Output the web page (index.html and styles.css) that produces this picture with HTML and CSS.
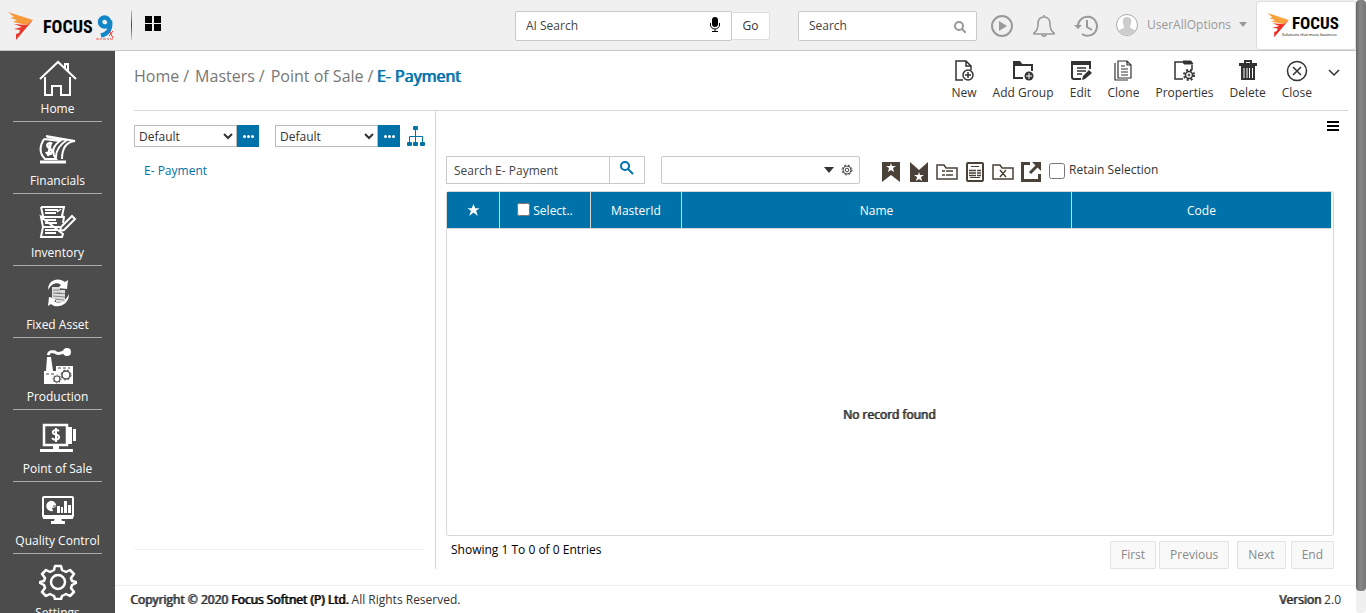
FILE: index.html
```html
<!DOCTYPE html>
<html lang="en">
<head>
<meta charset="utf-8">
<title>E- Payment</title>
<link rel="stylesheet" href="styles.css">
</head>
<body>
<div class="app">
  <header class="topbar">
    <a class="brand" href="#" aria-label="Focus 9">
      <svg class="brand-mark" width="26" height="29" viewBox="0 0 26 29"><path d="M0 0L25 8 19 13 5 10 9 8 2 6 6 5z" fill="#f79a3c"/><path d="M6 12L19 13 25 8 8 28 8 22 11 21 12 18 6 17 14 15z" fill="#e8392b"/></svg>
      <span class="brand-name">FOCUS</span>
      <svg class="brand-nine" width="19" height="28" viewBox="0 0 19 28"><path d="M13 8.500a4.500 4.500 0 1 0-4.500 5c3 0 5-1 5.500-6 1 8-1 13-9 15" fill="none" stroke="#1287c8" stroke-width="4.500"/><path d="M13 17l4 8M17 18l-4 5" stroke="#e33" stroke-width="1"/><path d="M0 26h17" stroke="#e55" stroke-width="1" stroke-dasharray="3 1 2 1"/></svg>
    </a>
    <span class="brand-rule"></span>
    <button class="plain" aria-label="Applications"><svg width="16" height="15"><path d="M0 0h7v7H0zM9 0h7v7H9zM0 8h7v7H0zM9 8h7v7H9z"/></svg></button>
    <div class="topbar-right">
      <form class="ai-search">
        <label class="field field-ai"><input type="text" placeholder="AI Search" aria-label="AI Search">
          <svg class="mic" width="10" height="15" viewBox="0 0 10 15"><rect x="2" y="0" width="6" height="10" rx="3"/><path d="M.5 6v2a4.500 4 0 0 0 9 0V6M5 12v2M2 14.500h6" fill="none" stroke="#000"/></svg></label>
        <button class="go" type="button">Go</button>
      </form>
      <label class="field field-search"><input type="text" placeholder="Search" aria-label="Search">
        <svg class="low" width="12" height="12" viewBox="0 0 12 12" fill="none" stroke="#999" stroke-width="2"><circle cx="5" cy="5" r="4"/><path d="M8 8l4 4"/></svg></label>
      <nav class="tools" aria-label="Quick tools">
        <button class="plain" aria-label="Play"><svg width="24" height="24" viewBox="0 0 24 24"><circle cx="12" cy="12" r="10" fill="none" stroke="#999" stroke-width="2"/><path d="M9 7l8 5-8 5z" fill="#999"/></svg></button>
        <button class="plain" aria-label="Notifications"><svg width="22" height="24" viewBox="0 0 22 24" fill="none" stroke="#999" stroke-width="1.600"><path d="M11 3c-4 0-6 3-6 7 0 5-1 7-4 9v1h20v-1c-3-2-4-4-4-9 0-4-2-7-6-7zM9 20c0 3 4 3 4 0M11 1v2"/></svg></button>
        <button class="plain" aria-label="History"><svg width="24" height="24" viewBox="0 0 24 24" fill="none" stroke="#999" stroke-width="2"><path d="M4 13a9.500 9.500 0 1 1 4 7M13 6v7l5 3"/><path d="M0 11l4 4 4-4z" fill="#999" stroke="none"/></svg></button>
      </nav>
      <button class="plain user"><svg width="22" height="22" viewBox="0 0 22 22"><circle cx="11" cy="11" r="10.500" fill="#fff" stroke="#aaa"/><path d="M11 3c-3 0-5 2-4 6 0 2 1 2 1 4 0 2-5 2-5 4 4 5 12 5 16 0 0-2-5-2-5-4 0-2 1-2 1-4 1-4-1-6-4-6z" fill="#ccc"/></svg>
        <span>UserAllOptions</span><svg width="8" height="5"><path d="M0 0h8L4 5z" fill="#999"/></svg></button>
      <a class="company" href="#" aria-label="Focus">
        <svg width="23" height="25" viewBox="0 0 26 29"><path d="M0 0L25 8 19 13 5 10 9 8 2 6 6 5z" fill="#f9a13a"/><path d="M6 12L19 13 25 8 8 28 8 22 11 21 12 18 6 17 14 15z" fill="#ee2e24"/></svg>
        <span class="company-text"><b>FOCUS</b><small>Solutions that move business</small></span>
      </a>
    </div>
  </header>

  <div class="body">
    <nav class="sidebar" aria-label="Modules">
      <a href="#"><svg width="38" height="36" viewBox="0 0 38 36" fill="none" stroke="#fff" stroke-width="2"><path d="M1 19L19 2l18 17M26 8V4h3v7M6 17v18h7v-9h9v9h9V17" /></svg>Home</a>
      <a href="#"><svg width="38" height="36" viewBox="0 0 38 36" fill="none" stroke="#fff" stroke-width="2"><path d="M5 7c-5 8-5 14 1 20h11c-5-7-3-13 4-18L5 7M7 4l29 5c-9 1-13 8-13 18M17 28c-1-9 3-15 11-20L8 5"/><path d="M1 30h26" stroke-width="3"/><path d="M13 12c-3-2-6 0-4 3 1 2 5 2 4 5s-5 2-6 0M12 10l-3 14" stroke-width="2.400"/></svg>Financials</a>
      <a href="#"><svg width="38" height="36" viewBox="0 0 38 36" fill="none" stroke="#fff"><path d="M2 3h23l-2 9 2 1-1 6M24 30l-1 3H2l2-10-2-10zM2 13l2-1-2-9M3 13h21M4 23h17" stroke-width="2"/><path d="M6 6h13M6 9h11M6 16h11M6 19h12M6 26h12M6 29h11" stroke-width="2"/><path d="M22 23L33 12l3 3-11 11-4 1z" stroke-width="2"/><path d="M18 8l4-3" stroke-width="1.500"/></svg>Inventory</a>
      <a href="#"><svg width="38" height="36" viewBox="0 0 38 36"><path d="M9 14C9 3 20 1 26 6l3-2-1 9-9-1 3-3C18 5 12 8 9 14zM30 18c0 12-13 15-18 10l-3 2 1-9 9 2-4 2c5 4 12 0 15-7z" fill="#fff"/><path d="M13 11h8v3h5v12h-9v-3h-4z" fill="#ddd"/><path d="M14 14h7M14 17h7l5 1M14 20l12 1M16 23l9 1" stroke="#888"/></svg>Fixed Asset</a>
      <a href="#"><svg width="38" height="36" viewBox="0 0 38 36"><path d="M5 36V23h2L8 9h4l2 14h3v-5h17v18z" fill="#fff"/><path d="M9 7c2-5 4-3 7-3 3 3 5 1 9 0" stroke="#fff" stroke-width="3" fill="none"/><circle cx="28" cy="4" r="4" fill="#fff"/><g fill="none" stroke="#4c4c4c"><path d="M7 26h8M19 20h12" stroke-dasharray="3 2"/><circle cx="27" cy="27" r="4" stroke-width="1.500"/><circle cx="27" cy="27" r="5" stroke-dasharray="2 2"/><circle cx="18" cy="31" r="3" stroke-width="1.200"/><circle cx="18" cy="31" r="4" stroke-dasharray="1 2"/></g></svg>Production</a>
      <a href="#"><svg width="38" height="36" viewBox="0 0 38 36"><path d="M5 5h23v20H5z" fill="none" stroke="#fff" stroke-width="2.500"/><path d="M29 7h4v2h4v12h-4v3h-4zM14 26h6v3h14v3H1v-3h13z" fill="#fff"/><path d="M33.500 9v13" stroke="#4c4c4c"/><path d="M20 11c-2-2-7-1-6 2 1 2 6 1 6 4s-5 4-7 1M17 8v14" fill="none" stroke="#fff" stroke-width="2"/></svg>Point of Sale</a>
      <a href="#"><svg width="38" height="36" viewBox="0 0 38 36"><rect x="4" y="5" width="30" height="20" rx="1" fill="none" stroke="#fff" stroke-width="2"/><path d="M4 23h30v4H4zM16 26h6l1 3h3v3H12v-3h3zM18 14h3v7h-3zM22 15h2v6h-2zM25 9h3v12h-3zM29 13h3v8h-3z" fill="#fff"/><path d="M11 9a5 5 0 1 0 3 10l-1-3 4-1a5 5 0 0 0-6-6z" fill="#fff"/><path d="M14 14h4" stroke="#4c4c4c"/></svg>Quality Control</a>
      <a href="#"><svg width="38" height="36" viewBox="0 0 38 36" fill="none" stroke="#fff" stroke-width="2.500"><circle cx="19" cy="18" r="7"/><path d="M16 2h6l1 4 4 2 4-2 4 4-3 4 1 3 4 1v1l-4 2-1 3 3 4-4 4-4-2-4 2-1 3h-6l-1-3-4-2-4 2-4-4 3-4-1-3-4-2v-1l4-1 1-3-3-4 4-4 4 2 4-2z" stroke-linejoin="round"/></svg>Settings</a>
    </nav>

    <div class="page">
      <main class="main">
        <div class="heading">
          <nav class="crumbs" aria-label="Breadcrumb"><a href="#">Home</a><span>/</span><a href="#">Masters</a><span>/</span><a href="#">Point of Sale</a><span class="tight">/</span><strong>E- Payment</strong></nav>
          <div class="actions">
            <button><svg viewBox="0 0 22 22"><path d="M10 20H3V1h10l5 5v4M13 1v5h5" stroke-width="1.500"/><circle cx="15" cy="15" r="5" stroke-width="1.500"/><path d="M15 12v6M12 15h6" stroke-width="1.500"/></svg>New</button>
            <button><svg viewBox="0 0 22 22"><path d="M11 18H2V3M2 5h18v6" stroke-width="2"/><path d="M1 1h7l3 4H1z" fill="#333" stroke="none"/><circle cx="17" cy="16" r="4.500" fill="#333" stroke="none"/><path d="M17 13v6M14 16h6" stroke="#fff"/></svg>Add Group</button>
            <button><svg viewBox="0 0 22 22"><path d="M11 19H4q-2 0-2-2V3h18v6" stroke-width="2"/><path d="M1 1h20v4H1z" fill="#333" stroke="none"/><path d="M7 8h9M7 11h9M7 14h5" stroke-width="1.500"/><path d="M12 20l1-4 6-6 3 3-7 6z" fill="#333" stroke="none"/></svg>Edit</button>
            <button><svg viewBox="0 0 22 22"><path d="M6 1h9l4 4v13H6zM15 1v4h4M3 3v17h13M9 6h4M9 9h7M9 12h7M9 15h7" stroke-width="1.200"/></svg>Clone</button>
            <button><svg viewBox="0 0 22 22"><path d="M10 19H2V2h8M19 5v5" stroke-width="1.500"/><path d="M10 1h8l2 3h-9z" fill="#333"/><circle cx="16" cy="15" r="3.500" stroke-width="1.500"/><circle cx="16" cy="15" r="5" stroke-width="2" stroke-dasharray="2 2"/><circle cx="16" cy="15" r="1"/></svg>Properties</button>
            <button><svg viewBox="0 0 22 22"><path d="M8 3V1h6v2" stroke-width="2"/><path d="M2 3h18v3H2zM4 6h14v14H4z" fill="#333" stroke="none"/><path d="M7 8v10M10 8v10M12.500 8v10M15.500 8v10" stroke="#fff"/></svg>Delete</button>
            <button><svg viewBox="0 0 22 22"><circle cx="11" cy="11" r="9.500" stroke-width="1.500"/><path d="M7 7l8 8M15 7l-8 8" stroke-width="1.500"/></svg>Close</button>
            <button class="more" aria-label="More actions"><svg viewBox="0 0 22 22"><path d="M6 10l5 5 5-5" stroke-width="1.500"/></svg></button>
          </div>
        </div>

        <div class="columns">
          <section class="tree">
            <div class="views">
              <select aria-label="Tree view"><option>Default</option></select><button class="dots" aria-label="Edit tree view"><i></i><i></i><i></i></button>
              <select class="second" aria-label="List view"><option>Default</option></select><button class="dots" aria-label="Edit list view"><i></i><i></i><i></i></button>
              <button class="plain org" aria-label="Hierarchy"><svg width="18" height="20" viewBox="0 0 18 20"><path d="M8.500 2v16M2.500 17v-6.500h13V17" fill="none" stroke="#0072aa"/><g fill="#0072aa"><rect x="6" y="0" width="5" height="4" rx="1"/><rect x="0" y="16" width="5" height="4" rx="1"/><rect x="6" y="16" width="5" height="4" rx="1"/><rect x="13" y="16" width="5" height="4" rx="1"/></g></svg></button>
            </div>
            <div class="tree-list"><a href="#">E- Payment</a></div>
          </section>

          <section class="records">
            <button class="plain menu" aria-label="Menu"><svg width="12" height="10"><path d="M0 1h12M0 5h12M0 9h12" stroke="#000" stroke-width="2"/></svg></button>
            <div class="filters">
              <input class="find" type="text" placeholder="Search E- Payment" aria-label="Search E- Payment"><button class="find-go" aria-label="Find"><svg width="14" height="14" viewBox="0 0 14 14" fill="none" stroke="#0072aa" stroke-width="2"><circle cx="5" cy="5" r="4"/><path d="M8 8l5 5"/></svg></button>
              <div class="combo"><input type="text" aria-label="Filter"><svg width="10" height="6"><path d="M0 0h10L5 6z" fill="#333"/></svg><svg width="12" height="12" viewBox="0 0 12 12" fill="none" stroke="#444"><circle cx="6" cy="6" r="4"/><circle cx="6" cy="6" r="5" stroke-dasharray="2 2"/><circle cx="6" cy="6" r="1.800"/></svg></div>
              <div class="icon-row">
                <button class="plain" aria-label="Bookmark"><svg viewBox="0 0 20 20"><path d="M1 0h18v20l-9-7-9 7z" fill="#4a4238"/><path d="M10 1l1 3h4l-3 2 1 4-3-2-3 2 1-4-3-2h4z" fill="#fff"/></svg></button>
                <button class="plain" aria-label="Remove bookmark"><svg viewBox="0 0 20 20"><path d="M1 0l9 8 9-8v20H1z" fill="#4a4238"/><path d="M10 10l1 3h4l-3 2 1 4-3-2-3 2 1-4-3-2h4z" fill="#fff"/></svg></button>
                <button class="plain" aria-label="Group list"><svg viewBox="0 0 20 20" fill="none" stroke="#4a4238"><path d="M0 17V3h7l2 3h11v11z" stroke-width="1.500"/><path d="M5 9h3M5 13h3M9 9h7M9 13h7" stroke-width="1.500"/></svg></button>
                <button class="plain" aria-label="Details"><svg viewBox="0 0 20 20" fill="none" stroke="#4a4238"><rect x="2" y="1" width="16" height="18" rx="1" stroke-width="2"/><path d="M6 4.500h8M5 15.500h10"/><path d="M4 8.500h7M4 11h7M4 13.500h7M12 8.500h4M12 11h4M12 13.500h4" stroke-width="1.500"/></svg></button>
                <button class="plain" aria-label="Ungroup"><svg viewBox="0 0 20 20" fill="none" stroke="#4a4238" stroke-width="1.500"><path d="M0 17V3h7l2 3h11v11zM7 8l6 7M13 8l-6 7"/></svg></button>
                <button class="plain" aria-label="Open"><svg viewBox="0 0 20 20" fill="none" stroke="#4a4238" stroke-width="3"><path d="M9 1.500H1.500v17h17V12M9 11l8-8"/><path d="M11 0h9v9z" fill="#4a4238" stroke="none"/></svg></button>
              </div>
              <label class="retain"><input type="checkbox">Retain Selection</label>
            </div>
            <div class="grid">
              <table>
                <colgroup><col class="c-star"><col class="c-mid"><col class="c-mid"><col class="c-name"><col></colgroup>
                <thead><tr><th aria-label="Favourite"><svg width="13" height="12" viewBox="0 0 14 14"><path d="M7 0l2 5h5l-4 3 2 6-5-4-5 4 2-6-4-3h5z" fill="#fff"/></svg></th><th><label class="select-all"><input type="checkbox">Select..</label></th><th>MasterId</th><th>Name</th><th>Code</th></tr></thead>
                <tbody><tr><td colspan="5"><b>No record found</b></td></tr></tbody>
              </table>
            </div>
            <div class="pager">
              <span>Showing 1 To 0 of 0 Entries</span>
              <div class="pager-group"><button disabled>First</button><button disabled>Previous</button></div>
              <div class="pager-group wide"><button disabled>Next</button><button disabled>End</button></div>
            </div>
          </section>
        </div>
      </main>
      <footer class="footer"><span><b>Copyright © 2020 <span class="owner">Focus Softnet (P) Ltd.</span></b> All Rights Reserved.</span><span><b>Version</b> 2.0</span></footer>
    </div>
  </div>
</div>
<div class="scroll"><div class="thumb"></div></div>
</body>
</html>
```

FILE: styles.css
```css
* { box-sizing: border-box; }
body { margin: 0; display: flex; height: 100vh; overflow: hidden; background: #fff; color: #333; font: 12px/20px "Open Sans", sans-serif; }
button, input, select { font: inherit; color: inherit; }
a { color: inherit; text-decoration: none; }
svg { display: block; flex: none; }
b, strong { font-weight: 400; text-shadow: 1px 0 currentColor; }
.plain { border: 0; background: none; padding: 0; }
input::placeholder { color: #444; opacity: 1; }

.app { flex: 1; min-width: 0; display: flex; flex-direction: column; }
.scroll { width: 10px; background: #f0f0f0; border-radius: 4px; display: flex; flex-direction: column; }
.thumb { height: 591px; border-radius: 4px; background: linear-gradient(90deg, #666, #888 40%, #777); }

/* top bar */
.topbar { height: 51px; flex: none; display: flex; align-items: center; background: #f0f0f0; border-bottom: 1px solid #c6c6c6; padding-left: 8px; }
.brand { display: flex; align-items: center; padding-top: 3px; }
.brand-name { margin-left: 9px; width: 53px; font: bold 18px/28px "Liberation Sans Narrow", "Roboto Condensed", "Open Sans Condensed", sans-serif; color: #000; }
.brand-rule { width: 1px; height: 30px; margin: 0 13px 0 16px; background: linear-gradient(#ccc, #444, #ccc); }
.topbar > .plain { padding-bottom: 4px; }
.topbar-right { margin-left: auto; display: flex; align-items: center; height: 100%; }
.ai-search { display: flex; align-items: center; margin-right: 28px; }
.ai-search, .field-search, .tools { margin-top: 1px; }
.field { display: flex; align-items: center; height: 30px; background: #fff; border: 1px solid #c9c9c9; border-radius: 2px; padding: 0 11px 0 10px; }
.field input { flex: 1; min-width: 0; border: 0; padding: 0; background: none; outline: 0; }
.field-ai { width: 217px; }
.field-search { width: 179px; padding-right: 10px; }
.mic { margin-bottom: 3px; }
.low { margin-top: 3px; }
.go { width: 38px; height: 28px; background: #fff; border: 1px solid #ddd; border-left: 0; border-radius: 2px; padding: 0; }
.tools { display: flex; gap: 19px; margin-left: 13px; }
.user { display: flex; align-items: center; color: #999; margin: 0 9px 0 18px; }
.user span { margin: 0 8px 0 9px; padding-bottom: 1px; }
.user svg:last-child { margin-bottom: 2px; }
.company { width: 100px; height: 49px; background: #fff; border: 1px solid #ddd; border-radius: 3px; display: flex; align-items: center; padding-left: 10px; }
.company-text { display: flex; flex-direction: column; margin-left: 2px; padding-top: 2px; color: #000; }
.company-text b { font: bold 17px/18px "Liberation Sans Narrow", "Roboto Condensed", "Open Sans Condensed", sans-serif; text-shadow: none; }
.company-text small { width: 56px; margin-left: -10px; font-size: 4px; line-height: 6px; white-space: nowrap; }

/* module list */
.body { flex: 1; min-height: 0; display: flex; }
.sidebar { width: 115px; flex: none; overflow: hidden; background: #4c4c4c; color: #fff; padding: 9px 13px 0; }
.sidebar a { display: flex; flex-direction: column; align-items: center; gap: 3px; padding-bottom: 2px; margin-bottom: 10px; border-bottom: 1px solid #aaa; white-space: nowrap; }

/* page */
.page { flex: 1; min-width: 0; display: flex; flex-direction: column; }
.main { flex: 1; min-height: 0; display: flex; flex-direction: column; padding: 0 8px 16px 19px; }
.heading { height: 60px; flex: none; display: flex; justify-content: space-between; border-bottom: 1px solid #d6d6d6; }
.crumbs { display: flex; align-items: center; height: 50px; font-size: 16px; color: #777; }
.crumbs span { margin: 0 6px 0 4px; }
.crumbs .tight { margin-right: 3px; }
.crumbs strong { color: #0072aa; }
.actions { display: flex; align-items: flex-start; gap: 16px; padding: 9px 3px 0 0; }
.actions button { border: 0; background: none; padding: 0; display: flex; flex-direction: column; align-items: center; gap: 1px; }
.actions svg { width: 22px; height: 22px; fill: none; stroke: #333; }
.actions .more { margin-left: -5px; }

.columns { flex: 1; min-height: 0; display: flex; }
.tree { width: 302px; flex: none; display: flex; flex-direction: column; border-right: 1px solid #d6d6d6; padding: 14px 10px 19px 0; }
.views { display: flex; align-items: center; }
.views select { width: 103px; height: 22px; border: 1px solid #bbb; border-radius: 0; background: #fff; padding: 0; }
.views .second { margin-left: 16px; }
.dots { width: 22px; height: 22px; border: 0; padding: 0; background: #0072aa; display: flex; align-items: center; justify-content: center; gap: 1px; }
.dots i { width: 3px; height: 3px; border-radius: 50%; background: #fff; }
.org { margin-left: 7px; }
.tree-list { flex: 1; border-bottom: 1px solid #eee; border-radius: 4px; padding: 14px 10px; color: #0072aa; }

.records { flex: 1; min-width: 0; display: flex; flex-direction: column; padding: 10px 14px 0 10px; }
.menu { align-self: flex-end; margin-right: -5px; }
.filters { display: flex; align-items: center; height: 28px; margin: 25px 0 7px; }
.find { width: 164px; height: 28px; border: 1px solid #c9c9c9; padding: 0 7px; }
.find-go { width: 35px; height: 28px; border: 1px solid #c9c9c9; border-left: 0; background: #fff; display: flex; justify-content: center; align-items: center; padding: 0 0 4px; }
.combo { width: 199px; height: 28px; margin: 0 21px 0 16px; border: 1px solid #c9c9c9; border-radius: 2px; display: flex; align-items: center; gap: 7px; padding: 0 6px; }
.combo input { flex: 1; min-width: 0; border: 0; outline: 0; }
.icon-row { display: flex; gap: 8px; padding-top: 4px; }
.icon-row svg { width: 20px; height: 20px; overflow: visible; }
.retain { display: flex; align-items: center; gap: 4px; margin-left: 8px; }
.retain input { width: 16px; height: 16px; margin: 2px 0 0; }

.grid { flex: 1; min-height: 0; border: 1px solid #d6d6d6; border-radius: 3px; padding-right: 2px; }
table { width: 100%; table-layout: fixed; border-collapse: separate; border-spacing: 0; }
.c-star { width: 53px; }
.c-mid { width: 91px; }
.c-name { width: 390px; }
th { height: 37px; padding: 2px 0 0; background: #0072aa; color: #fff; font-weight: 400; border-right: 1px solid #d6d6d6; border-bottom: 1px solid #d6d6d6; }
th:last-child { border-right: 0; }
th svg { margin: 0 auto 3px; }
.select-all { display: flex; align-items: center; justify-content: center; gap: 3px; }
.select-all input { width: 13px; height: 13px; margin: 0 0 4px; }
td { padding: 176px 0 0; text-align: center; }

.pager { display: flex; align-items: flex-start; padding-top: 5px; }
.pager > span { flex: 1; margin-top: -1px; padding-left: 5px; color: #000; }
.pager-group { display: flex; gap: 3px; }
.wide { gap: 5px; margin-left: 8px; }
.pager button { height: 28px; padding: 0 10px; border: 1px solid #e2e2e2; background: #f9f9f9; color: #888; border-radius: 1px; }

.footer { height: 28px; flex: none; display: flex; justify-content: space-between; align-items: center; border-top: 1px solid #eee; padding: 0 15px; }
.owner { color: #000; }
```
